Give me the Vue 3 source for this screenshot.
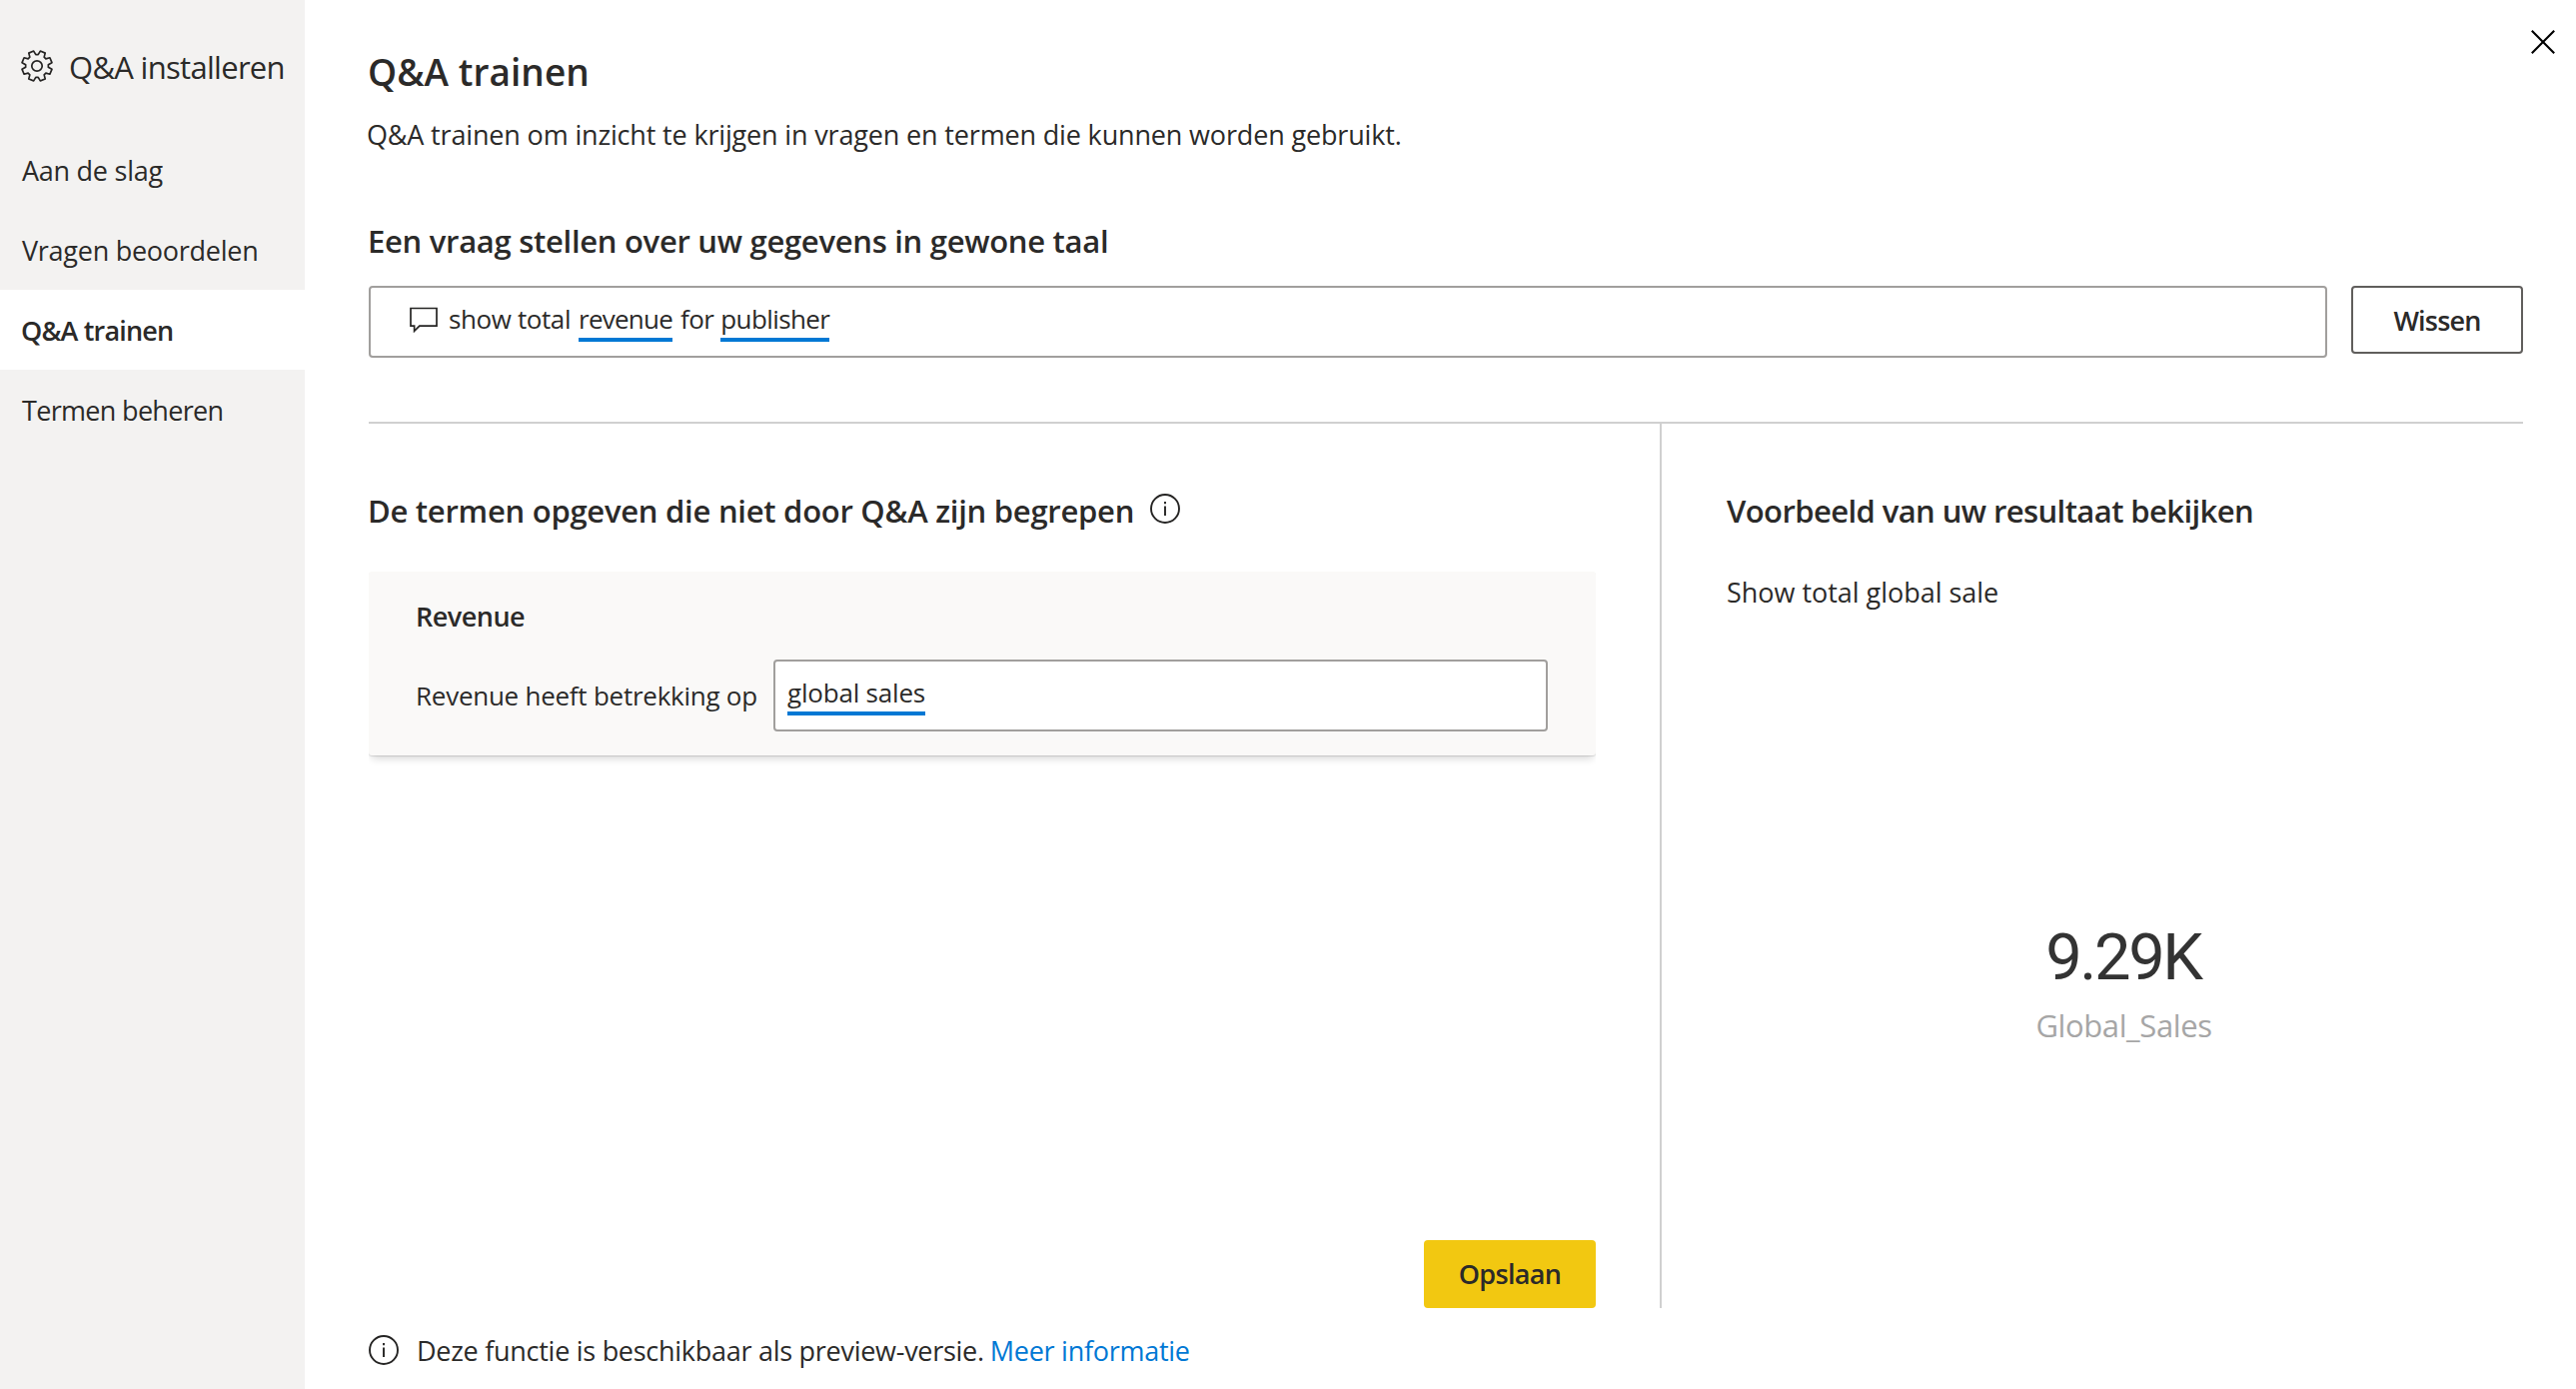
<script setup>
const menu = [
  { label: 'Aan de slag', tone: 'wide' },
  { label: 'Vragen beoordelen', tone: 'wide' },
  { label: 'Q&A trainen', active: true },
  { label: 'Termen beheren' }
]

// Outline of an eight-toothed gear with its notches on the axes
const point = (deg, r) => {
  const a = (deg * Math.PI) / 180
  return `${(16 + r * Math.sin(a)).toFixed(2)} ${(16 - r * Math.cos(a)).toFixed(2)}`
}
const gearPath =
  'M' +
  Array.from({ length: 8 }, (_, k) => k * 45)
    .flatMap((d) => [point(d - 6, 11.4), point(d + 6, 11.4), point(d + 12.5, 15.3), point(d + 32.5, 15.3)])
    .join('L') +
  'Z'
</script>

<template>
  <div class="app">
    <aside class="sidebar">
      <div class="sidebar-head">
        <svg class="gear" viewBox="0 0 32 32" width="32" height="32" fill="none" stroke="#252423" stroke-width="1.7" stroke-linejoin="round">
          <path :d="gearPath" />
          <circle cx="16" cy="16" r="5.2" />
        </svg>
        <span>Q&amp;A installeren</span>
      </div>
      <nav>
        <a v-for="item in menu" :key="item.label" class="item" :class="[{ active: item.active }, item.tone]">{{ item.label }}</a>
      </nav>
    </aside>

    <main class="main">
      <svg class="close" viewBox="0 0 24 24" width="24" height="24" stroke="#000" stroke-width="2.1">
        <path d="M.8 .8L23.2 23.2M23.2 .8L.8 23.2" />
      </svg>

      <h1>Q&amp;A trainen</h1>
      <p class="intro">Q&amp;A trainen om inzicht te krijgen in vragen en termen die kunnen worden gebruikt.</p>

      <h2 class="ask">Een vraag stellen over uw gegevens in gewone taal</h2>
      <div class="query-row">
        <div class="field query">
          <svg class="bubble" viewBox="0 0 28 26" width="28" height="26" fill="none" stroke="#252423" stroke-width="1.7">
            <path d="M1 1.5H27V19.2H9.8L4.6 24.3V19.2H1Z" />
          </svg>
          <span class="word show">show total</span>
          <span class="word term revenue">revenue</span>
          <span class="word for">for</span>
          <span class="word term publisher">publisher</span>
        </div>
        <button class="btn outline">Wissen</button>
      </div>

      <div class="columns">
        <section class="teach">
          <div class="teach-head">
            <h2 class="define">De termen opgeven die niet door Q&amp;A zijn begrepen</h2>
            <svg class="info" viewBox="0 0 30 30" width="30" height="30" fill="none" stroke="#252423" stroke-width="1.9">
              <circle cx="15" cy="15" r="14" />
              <path d="M15 12.4V22M15 8V10.2" />
            </svg>
          </div>
          <div class="card">
            <h3>Revenue</h3>
            <div class="card-row">
              <label>Revenue heeft betrekking op</label>
              <div class="field answer"><span class="word term sales">global sales</span></div>
            </div>
          </div>
          <button class="btn primary">Opslaan</button>
        </section>

        <section class="preview">
          <h2 class="result">Voorbeeld van uw resultaat bekijken</h2>
          <p class="restated">Show total global sale</p>
          <div class="value">9.29K</div>
          <div class="caption">Global_Sales</div>
        </section>
      </div>

      <footer>
        <svg class="info foot" viewBox="0 0 30 30" width="30" height="30" fill="none" stroke="#252423" stroke-width="1.9">
          <circle cx="15" cy="15" r="14" />
          <path d="M15 12.4V22M15 8V10.2" />
        </svg>
        <span>Deze functie is beschikbaar als preview-versie.</span>
        <a>Meer informatie</a>
      </footer>
    </main>
  </div>
</template>

<style>
body {
  margin: 0;
  background: #fff;
}
</style>

<style scoped>
* {
  box-sizing: border-box;
}
.app {
  display: flex;
  height: 1390px;
  overflow: hidden;
  background: #fff;
  color: #2b2a29;
  font: 400 27px/40px 'Open Sans', 'Noto Sans', sans-serif;
  white-space: nowrap;
}
h1,
h2,
h3,
p {
  margin: 0;
  font-weight: 600;
}
svg {
  display: block;
  flex: none;
}

.sidebar {
  width: 305px;
  flex: none;
  background: #f3f2f1;
}
.sidebar-head {
  display: flex;
  align-items: center;
  gap: 16px;
  height: 130px;
  padding: 47px 0 43px 21px;
  font-size: 31px;
  letter-spacing: -0.7px;
}
.gear {
  margin-bottom: 2px;
}
.item {
  display: block;
  height: 80px;
  padding-left: 22px;
  line-height: 82px;
  letter-spacing: -0.68px;
}
.item.wide {
  letter-spacing: -0.26px;
}
.item.active {
  padding-left: 21px;
  background: #fff;
  font-weight: 600;
  letter-spacing: -0.83px;
}

.main {
  position: relative;
  flex: 1;
  min-width: 0;
  padding: 47px 53px 0 64px;
}
.close {
  position: absolute;
  top: 30px;
  right: 21px;
}
h1 {
  margin-left: -1px;
  font-size: 37px;
  line-height: 50px;
  letter-spacing: 0.05px;
}
.intro {
  margin: 18px 0 0 -2px;
  font-weight: 400;
  letter-spacing: -0.16px;
}
h2 {
  font-size: 31px;
  line-height: 44px;
}
.ask {
  margin: 64px 0 0 -1px;
  letter-spacing: -0.287px;
}

.query-row {
  display: flex;
  justify-content: space-between;
  margin-top: 23px;
}
.field {
  display: flex;
  height: 72px;
  border: 2px solid #a19f9d;
  border-radius: 4px;
  background: #fff;
}
.query {
  width: 1960px;
  padding: 12px 0 0 39px;
}
.bubble {
  margin: 7px 11px 0 0;
}
.word {
  height: 42px;
  font-size: 26px;
  line-height: 38px;
}
.term {
  border-bottom: 4px solid #0078d4;
}
.show {
  margin-right: 8px;
  letter-spacing: -0.4px;
}
.revenue {
  width: 94px;
  letter-spacing: -0.76px;
}
.for {
  margin: 0 7px 0 8px;
  letter-spacing: -0.6px;
}
.publisher {
  width: 109px;
  letter-spacing: -0.6px;
}
.btn {
  width: 172px;
  height: 68px;
  padding: 0;
  border: 0;
  border-radius: 4px;
  color: #2b2a29;
  font: inherit;
  font-weight: 600;
}
.outline {
  padding-top: 1px;
  border: 2px solid #605e5c;
  background: #fff;
  letter-spacing: -0.8px;
}
.primary {
  margin: auto 64px 0 auto;
  background: #f2c811;
  letter-spacing: -0.68px;
}

.columns {
  display: flex;
  height: 887px;
  margin-top: 64px;
  border-top: 2px solid #d0d0d0;
}
.teach {
  display: flex;
  flex-direction: column;
  width: 1294px;
  padding-top: 65px;
  border-right: 2px solid #d0d0d0;
}
.teach-head {
  display: flex;
  align-items: center;
  gap: 16px;
  margin-left: -1px;
}
.define {
  letter-spacing: -0.26px;
}
.info {
  margin-bottom: 4px;
}
.card {
  width: 1228px;
  height: 184px;
  margin-top: 39px;
  padding: 25px 48px 0 47px;
  border-radius: 3px;
  background: #faf9f8;
  box-shadow: 0 1px 1px rgba(0, 0, 0, 0.12), 0 6px 8px -3px rgba(0, 0, 0, 0.16);
  clip-path: inset(0 0 -16px 0);
}
h3 {
  font-size: 27px;
  line-height: 40px;
  letter-spacing: -0.51px;
}
.card-row {
  display: flex;
  margin-top: 23px;
}
label {
  width: 358px;
  font-size: 26px;
  line-height: 73px;
  letter-spacing: -0.25px;
}
.answer {
  flex: 1;
  padding: 12px 0 0 12px;
}
.sales {
  width: 138px;
  letter-spacing: -0.2px;
}

.preview {
  flex: 1;
  padding: 65px 0 0 65px;
}
.result {
  letter-spacing: -0.585px;
}
.restated {
  margin: 40px 0 0;
  font-weight: 400;
  letter-spacing: -0.03px;
}
.value {
  margin-top: 310px;
  padding-right: 3px;
  color: #333;
  font: 400 65px/70px Roboto, 'Open Sans', sans-serif;
  letter-spacing: -2.4px;
  text-align: center;
}
.caption {
  margin-top: 11px;
  padding-right: 2px;
  color: #a6a6a6;
  font-size: 31px;
  line-height: 44px;
  letter-spacing: -0.4px;
  text-align: center;
}

footer {
  display: flex;
  align-items: center;
  margin-top: 23px;
  letter-spacing: -0.275px;
}
.foot {
  margin: 0 18px 2px 0;
}
footer a {
  margin-left: 6px;
  color: #0078d4;
}
</style>
